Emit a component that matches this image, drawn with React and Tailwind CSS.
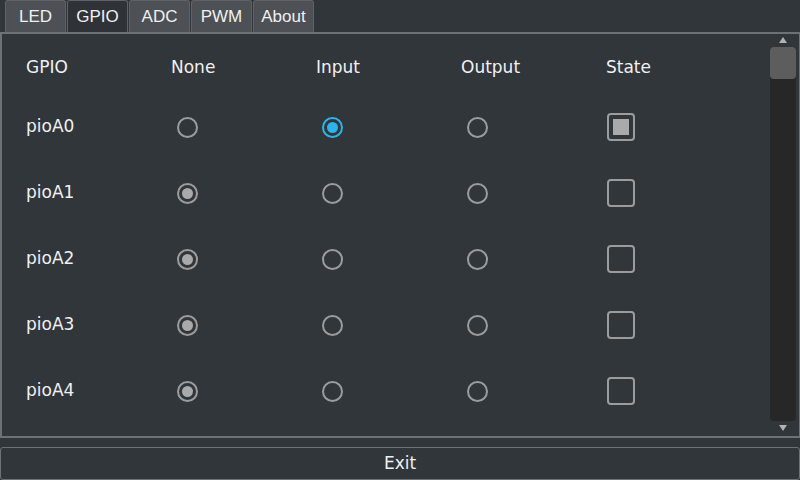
import React from "react";

const rows = [
  { name: "pioA0", sel: 1, state: true },
  { name: "pioA1", sel: 0, state: false },
  { name: "pioA2", sel: 0, state: false },
  { name: "pioA3", sel: 0, state: false },
  { name: "pioA4", sel: 0, state: false },
];

function Radio({ checked, active }) {
  if (checked && active)
    return (
      <div className="w-[21px] h-[21px] rounded-full border-2 border-[#2eb3ea] flex items-center justify-center">
        <div className="w-[11px] h-[11px] rounded-full bg-[#2eb3ea]" />
      </div>
    );
  return (
    <div className="w-[21px] h-[21px] rounded-full border-2 border-[#9a9c9e] flex items-center justify-center">
      {checked && <div className="w-[11px] h-[11px] rounded-full bg-[#a9aaab]" />}
    </div>
  );
}

function Check({ checked }) {
  return (
    <div className="w-[28px] h-[28px] rounded-[4px] border-2 border-[#9a9c9e] flex items-center justify-center">
      {checked && <div className="w-[16px] h-[16px] bg-[#a9aaab]" />}
    </div>
  );
}

export default function App() {
  const tabs = ["LED", "GPIO", "ADC", "PWM", "About"];
  return (
    <div className="w-[800px] h-[480px] bg-[#31363b] flex flex-col text-[#eff0f1] overflow-hidden" style={{ fontFamily: '"DejaVu Sans", sans-serif' }}>
      <div className="h-[32px] flex pl-[5px] gap-[1px] shrink-0" style={{ fontFamily: '"Liberation Sans", sans-serif' }}>
        {tabs.map((t, i) => (
          <div
            key={t}
            className={`w-[61px] h-[32px] flex items-center justify-center text-[17px] rounded-t-[3px] border border-b-0 border-[#5f6367] ${i === 1 ? "bg-[#2f3338]" : "bg-[#4d5155]"}`}
          >
            {t}
          </div>
        ))}
      </div>
      <div className="h-[406px] border-2 border-r border-[#6e7275] flex shrink-0 relative">
        <div className="flex-1 pl-[24px] text-[17px]">
          <div className="h-[66px] flex items-center pt-[2px]">
            {["GPIO", "None", "Input", "Output", "State"].map((h) => (
              <div key={h} className="w-[145px]">{h}</div>
            ))}
          </div>
          {rows.map((r, idx) => (
            <div key={r.name} className={`h-[66px] flex items-center ${idx === 0 ? "mt-[-6px]" : ""}`}>
              <div className="w-[145px]">{r.name}</div>
              <div className="w-[145px] pl-[6px]"><Radio checked={r.sel === 0} /></div>
              <div className="w-[145px] pl-[6px]"><Radio checked={r.sel === 1} active /></div>
              <div className="w-[145px] pl-[6px]"><Radio checked={r.sel === 2} /></div>
              <div className="w-[145px] pl-[1px]"><Check checked={r.state} /></div>
            </div>
          ))}
        </div>
        <div className="w-[28px] mr-[2px] flex flex-col items-center pt-[3px]">
          <div className="w-0 h-0 border-l-[4px] border-r-[4px] border-b-[6px] border-l-transparent border-r-transparent border-b-[#b0b2b4]" />
          <div className="mt-[4px] w-[26px] h-[374px] rounded-[4px] bg-[#272727] flex flex-col">
            <div className="h-[32px] rounded-[4px] bg-[#5d5d5d]" />
          </div>
          <div className="mt-[4px] w-0 h-0 border-l-[4px] border-r-[4px] border-t-[6px] border-l-transparent border-r-transparent border-t-[#b0b2b4]" />
        </div>
      </div>
      <div className="mt-[9px] h-[33px] border border-[#6e7275] rounded-[3px] flex items-center justify-center text-[17px]">
        Exit
      </div>
    </div>
  );
}
